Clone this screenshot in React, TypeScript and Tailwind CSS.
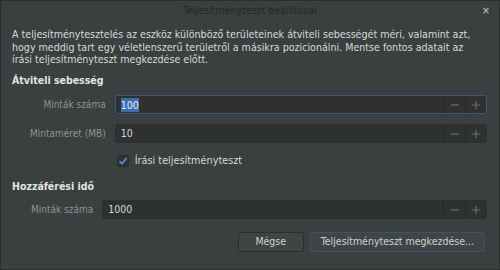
import React from "react";

function Spin({ value, focused, selected }: { value: string; focused?: boolean; selected?: boolean }) {
  return (
    <div
      className={`flex h-[19px] items-stretch rounded-[3px] border bg-[#2f3131] ${
        focused ? "border-[#3d5775]" : "border-[#2b2f2f]"
      }`}
    >
      <div className="flex flex-1 items-center pl-[5px] text-[10.5px] text-[#d6d8d8]">
        {selected ? <span className="bg-[#3d6cb0] text-[#e8eef7] leading-[14px]">{value}</span> : <span>{value}</span>}
      </div>
      <div className="flex w-[22px] items-center justify-center border-l border-[#262828] text-[#6a6f6f]">
        <svg width="10" height="10" viewBox="0 0 10 10"><path d="M1 5h8" stroke="currentColor" strokeWidth="1.2" /></svg>
      </div>
      <div className="flex w-[21px] items-center justify-center border-l border-[#262828] text-[#6a6f6f]">
        <svg width="10" height="10" viewBox="0 0 10 10"><path d="M1 5h8M5 1v8" stroke="currentColor" strokeWidth="1.2" /></svg>
      </div>
    </div>
  );
}

export default function App() {
  return (
    <div className="h-[270px] w-[500px] overflow-hidden bg-[#2b2f2f] font-['DejaVu_Sans_Condensed','DejaVu_Sans',sans-serif] font-stretch-condensed">
      <div className="flex h-[270px] w-[500px] flex-col border border-[#2a2e2e] bg-[#3a3f3f]">
        <div className="relative flex h-[20px] items-center justify-center text-[10.5px] text-[#262a2a]">
          <span>Teljesítményteszt beállításai</span>
          <span className="absolute right-[9px] top-[2px] text-[11px] font-bold text-[#a9adad]">×</span>
        </div>
        <div className="w-[484px] pl-[11px] pr-[11px] pt-[7px] text-[10.6px] leading-[12.5px] text-[#d8dada]">
          A teljesítménytesztelés az eszköz különböző területeinek átviteli sebességét méri, valamint azt, hogy meddig tart egy véletlenszerű területről a másikra pozicionálni. Mentse fontos adatait az írási teljesítményteszt megkezdése előtt.
        </div>
        <div className="px-[11px] pt-[7px] text-[10.5px] font-bold text-[#e2e4e4]">Átviteli sebesség</div>
        <div className="mt-[7px] grid grid-cols-[auto_1fr] items-center gap-x-[9px] gap-y-[10px] pl-[29px] pr-[12px]">
          <div className="text-right text-[10px] text-[#8e9393]">Minták száma</div>
          <Spin value="100" focused selected />
          <div className="text-right text-[10px] text-[#8e9393]">Mintaméret (MB)</div>
          <Spin value="10" />
          <div />
          <div className="flex items-center gap-[6px] pl-[2px]">
            <div className="flex h-[12px] w-[12px] items-center justify-center rounded-[2px] border border-[#2a2d2d] bg-[#2f3232]">
              <svg width="10" height="10" viewBox="0 0 10 10">
                <path d="M1.5 5.2 L4 7.6 L8.6 2" stroke="#4f8fd8" strokeWidth="1.8" fill="none" />
              </svg>
            </div>
            <span className="text-[10.8px] text-[#d6d8d8]">Írási teljesítményteszt</span>
          </div>
        </div>
        <div className="px-[11px] pt-[10px] text-[10.5px] font-bold text-[#e2e4e4]">Hozzáférési idő</div>
        <div className="mt-[5px] grid grid-cols-[auto_1fr] items-center gap-x-[9px] pl-[30px] pr-[12px]">
          <div className="text-right text-[10px] text-[#8e9393]">Minták száma</div>
          <Spin value="1000" />
        </div>
        <div className="mt-[13px] flex justify-end gap-[6px] pr-[14px]">
          <button className="h-[20px] w-[66px] rounded-[3px] border border-[#2a2e2e] bg-[#3f4545] text-[10.5px] text-[#cdd1d1]">
            Mégse
          </button>
          <button className="h-[20px] rounded-[3px] border border-[#3a5370] bg-[#3f4545] px-[10px] text-[10.5px] text-[#cdd1d1]">
            Teljesítményteszt megkezdése...
          </button>
        </div>
      </div>
    </div>
  );
}
